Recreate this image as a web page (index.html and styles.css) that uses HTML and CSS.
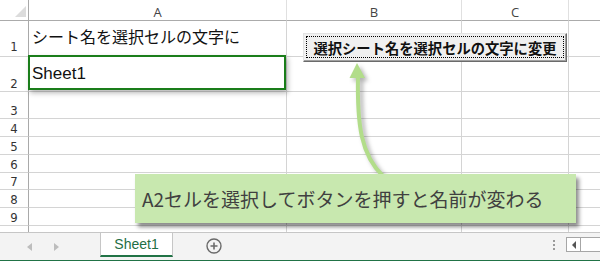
FILE: index.html
```html
<!DOCTYPE html>
<html lang="ja">
<head>
    <meta charset="UTF-8">
    <title>シート名を選択セルの文字に</title>
    <link rel="stylesheet" href="styles.css">
</head>
<body>
    <div class="sheet">
        <div class="grid">
            <div class="row hdr">
                <div class="rh corner"><span class="tri"></span></div>
                <div class="c a">A</div>
                <div class="c b">B</div>
                <div class="c cc">C</div>
                <div class="c d"></div>
            </div>
            <div class="row r1">
                <div class="rh">1</div>
                <div class="c a"><span class="val jp">シート名を選択セルの文字に</span></div>
                <div class="c b"></div>
                <div class="c cc"></div>
                <div class="c d"></div>
            </div>
            <div class="row r2">
                <div class="rh">2</div>
                <div class="c a"><span class="val en">Sheet1</span></div>
                <div class="c b"></div>
                <div class="c cc"></div>
                <div class="c d"></div>
            </div>
            <div class="row r3">
                <div class="rh">3</div>
                <div class="c a"></div><div class="c b"></div><div class="c cc"></div><div class="c d"></div>
            </div>
            <div class="row rs">
                <div class="rh">4</div>
                <div class="c a"></div><div class="c b"></div><div class="c cc"></div><div class="c d"></div>
            </div>
            <div class="row rs">
                <div class="rh">5</div>
                <div class="c a"></div><div class="c b"></div><div class="c cc"></div><div class="c d"></div>
            </div>
            <div class="row rs">
                <div class="rh">6</div>
                <div class="c a"></div><div class="c b"></div><div class="c cc"></div><div class="c d"></div>
            </div>
            <div class="row rs short">
                <div class="rh">7</div>
                <div class="c a"></div><div class="c b"></div><div class="c cc"></div><div class="c d"></div>
            </div>
            <div class="row rs">
                <div class="rh">8</div>
                <div class="c a"></div><div class="c b"></div><div class="c cc"></div><div class="c d"></div>
            </div>
            <div class="row rs">
                <div class="rh">9</div>
                <div class="c a"></div><div class="c b"></div><div class="c cc"></div><div class="c d"></div>
            </div>
            <div class="row r10">
                <div class="rh"></div>
                <div class="c a"></div><div class="c b"></div><div class="c cc"></div><div class="c d"></div>
            </div>
        </div>

        <div class="tabs">
            <div class="nav">
                <span class="arr left"></span>
                <span class="arr right"></span>
            </div>
            <div class="tab">Sheet1</div>
            <div class="add">
                <svg width="16" height="16" viewBox="0 0 16 16">
                    <circle cx="8" cy="8" r="7" fill="none" stroke="#6a6a6a" stroke-width="1.4"/>
                    <path d="M8 4.5v7M4.5 8h7" stroke="#6a6a6a" stroke-width="1.6"/>
                </svg>
            </div>
            <div class="spacer"></div>
            <div class="dots"><i></i><i></i><i></i></div>
            <div class="scroll">
                <div class="sbtn"><span class="sarr"></span></div>
                <div class="strack"></div>
            </div>
        </div>

        <!-- 選択セル -->
        <div class="selection"></div>

        <!-- フォームボタン -->
        <div class="btn">
            <div class="focus">選択シート名を選択セルの文字に変更</div>
        </div>

        <!-- 吹き出しと矢印 -->
        <svg class="arrow" width="600" height="261" viewBox="0 0 600 261">
            <path d="M358 76 C357 125, 361 155, 383 176" fill="none" stroke="#b2dd8a" stroke-width="4"/>
            <polygon points="357,63 349.5,78 365,78" fill="#b2dd8a"/>
        </svg>
        <div class="callout">A2セルを選択してボタンを押すと名前が変わる</div>
    </div>
</body>
</html>
```

FILE: styles.css
```css
* {
    margin: 0;
    padding: 0;
    box-sizing: border-box;
}

body {
    width: 600px;
    height: 261px;
    overflow: hidden;
    background: #fff;
    font-family: 'Liberation Sans', 'Noto Sans CJK JP', sans-serif;
}

.sheet {
    position: relative;
    width: 600px;
    height: 261px;
}

.grid {
    display: flex;
    flex-direction: column;
}

.row {
    display: flex;
    height: 18px;
}

.row.hdr { height: 21px; }
.row.r1 { height: 36px; }
.row.r2 { height: 35px; }
.row.r3 { height: 27px; }
.row.short { height: 17px; }
.row.r10 { height: 6px; }

.rh {
    width: 29px;
    flex: none;
    border-right: 1px solid #a9a9a9;
    border-bottom: 1px solid #d4d4d4;
    display: flex;
    justify-content: center;
    align-items: flex-end;
    padding-bottom: 1px;
    font-family: 'Liberation Sans Narrow', 'DejaVu Sans Condensed', 'Liberation Sans', sans-serif;
    font-size: 13px;
    line-height: 1;
    color: #333;
}

.r1 .rh { padding-bottom: 3px; }

.c {
    flex: none;
    border-right: 1px solid #d4d4d4;
    border-bottom: 1px solid #d4d4d4;
}

.c.a { width: 258px; }
.c.b { width: 175px; }
.c.cc { width: 107px; }
.c.d { flex: 1; border-right: none; }

.r10 .rh, .r10 .c { border-bottom: none; }

.hdr .rh, .hdr .c {
    border-bottom: 1px solid #ababab;
}

.hdr .c {
    border-right-color: #e0e0e0;
    text-align: center;
    font-family: 'Open Sans', 'Liberation Sans', sans-serif;
    font-size: 13px;
    line-height: 24px;
    color: #444;
}

.corner {
    justify-content: flex-end;
    padding: 0 2px 3px 0;
}

.tri {
    width: 0;
    height: 0;
    border-left: 11px solid transparent;
    border-bottom: 11px solid #dcdcdc;
}

.val {
    display: block;
    padding-left: 3px;
    color: #111;
    white-space: nowrap;
}

.val.jp {
    padding-top: 7px;
    font-family: 'Noto Sans CJK JP', sans-serif;
    font-size: 16px;
    line-height: 16px;
}

.val.en {
    padding-top: 8px;
    font-size: 17px;
    line-height: 17px;
}

/* シートタブ */
.tabs {
    height: 30px;
    display: flex;
    align-items: stretch;
    background: #f3f3f3;
    border-top: 1px solid #c6c6c6;
    border-bottom: 2px solid #217346;
}

.nav {
    width: 100px;
    display: flex;
    align-items: center;
    padding-left: 27px;
    gap: 22px;
}

.arr {
    width: 0;
    height: 0;
    border-top: 4px solid transparent;
    border-bottom: 4px solid transparent;
}

.arr.left { border-right: 5px solid #bdbdbd; }
.arr.right { border-left: 5px solid #bdbdbd; }

.tab {
    width: 73px;
    height: 24px;
    background: #fff;
    border-left: 1px solid #c6c6c6;
    border-right: 1px solid #c6c6c6;
    border-bottom: 2px solid #217346;
    text-align: center;
    font-size: 14px;
    line-height: 22px;
    color: #1f6f45;
}

.add {
    width: 82px;
    display: flex;
    align-items: center;
    justify-content: center;
    padding-bottom: 2px;
}

.spacer { flex: 1; }

.dots {
    width: 8px;
    display: flex;
    flex-direction: column;
    justify-content: center;
    align-items: center;
    gap: 2px;
    margin-right: 8px;
    padding-bottom: 3px;
}

.dots i {
    width: 2px;
    height: 2px;
    background: #9a9a9a;
}

.scroll {
    width: 34px;
    display: flex;
    align-items: center;
    padding-bottom: 4px;
}

.sbtn {
    width: 15px;
    height: 15px;
    border: 1px solid #a6a6a6;
    background: #fff;
    display: flex;
    align-items: center;
    justify-content: center;
}

.sarr {
    width: 0;
    height: 0;
    border-top: 4px solid transparent;
    border-bottom: 4px solid transparent;
    border-right: 4px solid #555;
}

.strack {
    flex: 1;
    height: 15px;
    background: #fff;
    border-top: 1px solid #a6a6a6;
    border-bottom: 1px solid #a6a6a6;
}

/* 重なるもの */
.selection {
    position: absolute;
    left: 28px;
    top: 55px;
    width: 258px;
    height: 35px;
    border: 2px solid #1a7d1a;
    box-shadow: 2px 3px 5px rgba(0, 0, 0, 0.28);
}

.btn {
    position: absolute;
    left: 303px;
    top: 33px;
    width: 264px;
    height: 29px;
    padding: 2px 2px 3px 2px;
    background: #f0f0f0;
    border-top: 1px solid #e3e3e3;
    border-left: 1px solid #e3e3e3;
    border-right: 1px solid #6b6b6b;
    border-bottom: 1px solid #6b6b6b;
    box-shadow: inset -1px -1px 0 #a0a0a0;
}

.focus {
    height: 100%;
    border: 1px dotted #000;
    display: flex;
    align-items: center;
    justify-content: center;
    font-family: 'Noto Sans CJK JP', sans-serif;
    font-size: 14.3px;
    font-weight: bold;
    color: #111;
    white-space: nowrap;
}

.arrow {
    position: absolute;
    left: 0;
    top: 0;
    filter: drop-shadow(3px 3px 2px rgba(0, 0, 0, 0.3));
}

.callout {
    position: absolute;
    left: 135px;
    top: 174px;
    width: 441px;
    height: 49px;
    padding-left: 7px;
    background: #c8e8af;
    box-shadow: 3px 4px 4px rgba(0, 0, 0, 0.45);
    display: flex;
    align-items: center;
    font-family: 'Noto Sans CJK JP', sans-serif;
    font-size: 19px;
    color: #404040;
    white-space: nowrap;
}
```
